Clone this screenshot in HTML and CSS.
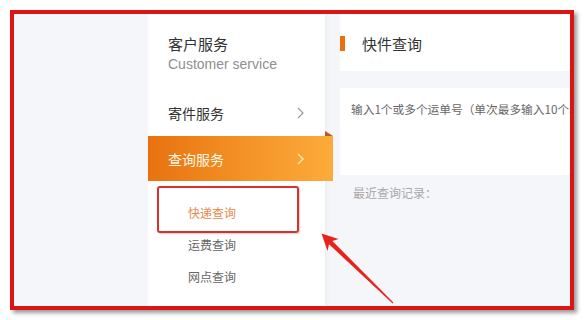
FILE: index.html
```html
<!DOCTYPE html>
<html lang="zh-CN">
<head>
<meta charset="utf-8">
<title>客户服务</title>
<link rel="stylesheet" href="styles.css">
</head>
<body>
<div class="frame">
  <aside class="sidebar">
    <div class="side-head">
      <div class="side-title">客户服务</div>
      <div class="side-sub">Customer service</div>
    </div>
    <div class="nav-item">
      <span>寄件服务</span>
      <svg class="chev" width="7" height="12" viewBox="0 0 7 12"><polyline points="1,1 6,6 1,11" fill="none" stroke="#9a9a9a" stroke-width="1.2"/></svg>
    </div>
    <div class="nav-item active">
      <span>查询服务</span>
      <svg class="chev" width="7" height="12" viewBox="0 0 7 12"><polyline points="1,1 6,6 1,11" fill="none" stroke="#fde6bd" stroke-width="1.4"/></svg>
      <i class="fold"></i>
    </div>
    <ul class="sub-list">
      <li class="sub-item current">快递查询</li>
      <li class="sub-item">运费查询</li>
      <li class="sub-item">网点查询</li>
    </ul>
  </aside>
  <main class="content">
    <div class="title-card">
      <i class="title-bar"></i>
      <span class="title-text">快件查询</span>
    </div>
    <div class="input-card">输入1个或多个运单号（单次最多输入10个单号）</div>
    <div class="recent">最近查询记录：</div>
  </main>
</div>
<div class="mark-box"></div>
<svg class="arrow" width="584" height="320" viewBox="0 0 584 320">
  <polygon points="321.5,233.5 338.5,239 332.4,241 393.4,302.4 392.6,303.4 329,244.3 327.5,251" fill="#e8231b"/>
</svg>
</body>
</html>
```
FILE: styles.css
```css
* { box-sizing: border-box; }
html, body { margin: 0; padding: 0; }
body {
  width: 584px;
  height: 320px;
  background: #ffffff;
  font-family: "Noto Sans CJK SC", "Liberation Sans", sans-serif;
  position: relative;
  overflow: hidden;
}
.frame {
  margin: 10px 0 0 10px;
  width: 564px;
  height: 300px;
  border: 4px solid #dc1414;
  background: #f5f6f9;
  display: flex;
  padding-left: 134px;
  overflow: hidden;
  box-shadow: 3px 3px 4px rgba(0, 0, 0, 0.4);
}
.sidebar {
  width: 177px;
  flex: none;
  background: #ffffff;
  box-shadow: 2px 0 4px rgba(0, 0, 0, 0.04);
  display: flex;
  flex-direction: column;
  position: relative;
  z-index: 1;
}
.side-head {
  padding: 19px 0 0 20px;
}
.side-title {
  font-size: 15px;
  line-height: 22px;
  color: #333333;
}
.side-sub {
  font-family: "Liberation Sans", sans-serif;
  font-size: 14px;
  line-height: 18px;
  color: #8f8f8f;
}
.nav-item {
  height: 46px;
  display: flex;
  align-items: center;
  justify-content: space-between;
  padding: 0 21px 0 20px;
  font-size: 14px;
  color: #333333;
  position: relative;
}
.side-head + .nav-item { margin-top: 17px; }
.nav-item.active {
  width: 185px;
  height: 45px;
  padding-right: 29px;
  color: #fff7ea;
  background: linear-gradient(90deg, #e8720f 0%, #f49428 55%, #fcab3a 100%);
}
.fold {
  position: absolute;
  right: 0;
  top: -5px;
  width: 0;
  height: 0;
  border-left: 8px solid #c4541e;
  border-top: 5px solid transparent;
}
.sub-list {
  list-style: none;
  margin: 0;
  padding: 16px 0 0 40px;
}
.sub-item {
  height: 32px;
  line-height: 32px;
  font-size: 12px;
  color: #666666;
}
.sub-item.current { color: #e98a4c; }
.content {
  flex: 1;
  margin-left: 15px;
  display: flex;
  flex-direction: column;
  min-width: 0;
}
.title-card {
  height: 57px;
  background: #ffffff;
  display: flex;
  align-items: center;
  padding-top: 2px;
}
.title-bar {
  width: 5px;
  height: 15px;
  background: #e8700f;
}
.title-text {
  margin-left: 17px;
  font-size: 15px;
  color: #333333;
}
.input-card {
  margin-top: 17px;
  height: 87px;
  background: #ffffff;
  padding: 12px 0 0 11px;
  font-size: 11.7px;
  line-height: 18px;
  color: #666666;
  white-space: nowrap;
  overflow: hidden;
}
.recent {
  margin-top: 9px;
  padding-left: 13px;
  font-size: 12px;
  line-height: 18px;
  color: #a8a8a8;
}
.mark-box {
  position: absolute;
  left: 157px;
  top: 186px;
  width: 142px;
  height: 47px;
  border: 2px solid #d9302c;
  border-radius: 3px;
  box-shadow: 1px 1px 2px rgba(0, 0, 0, 0.2);
  z-index: 2;
}
.arrow {
  position: absolute;
  left: 0;
  top: 0;
  z-index: 3;
}
```
